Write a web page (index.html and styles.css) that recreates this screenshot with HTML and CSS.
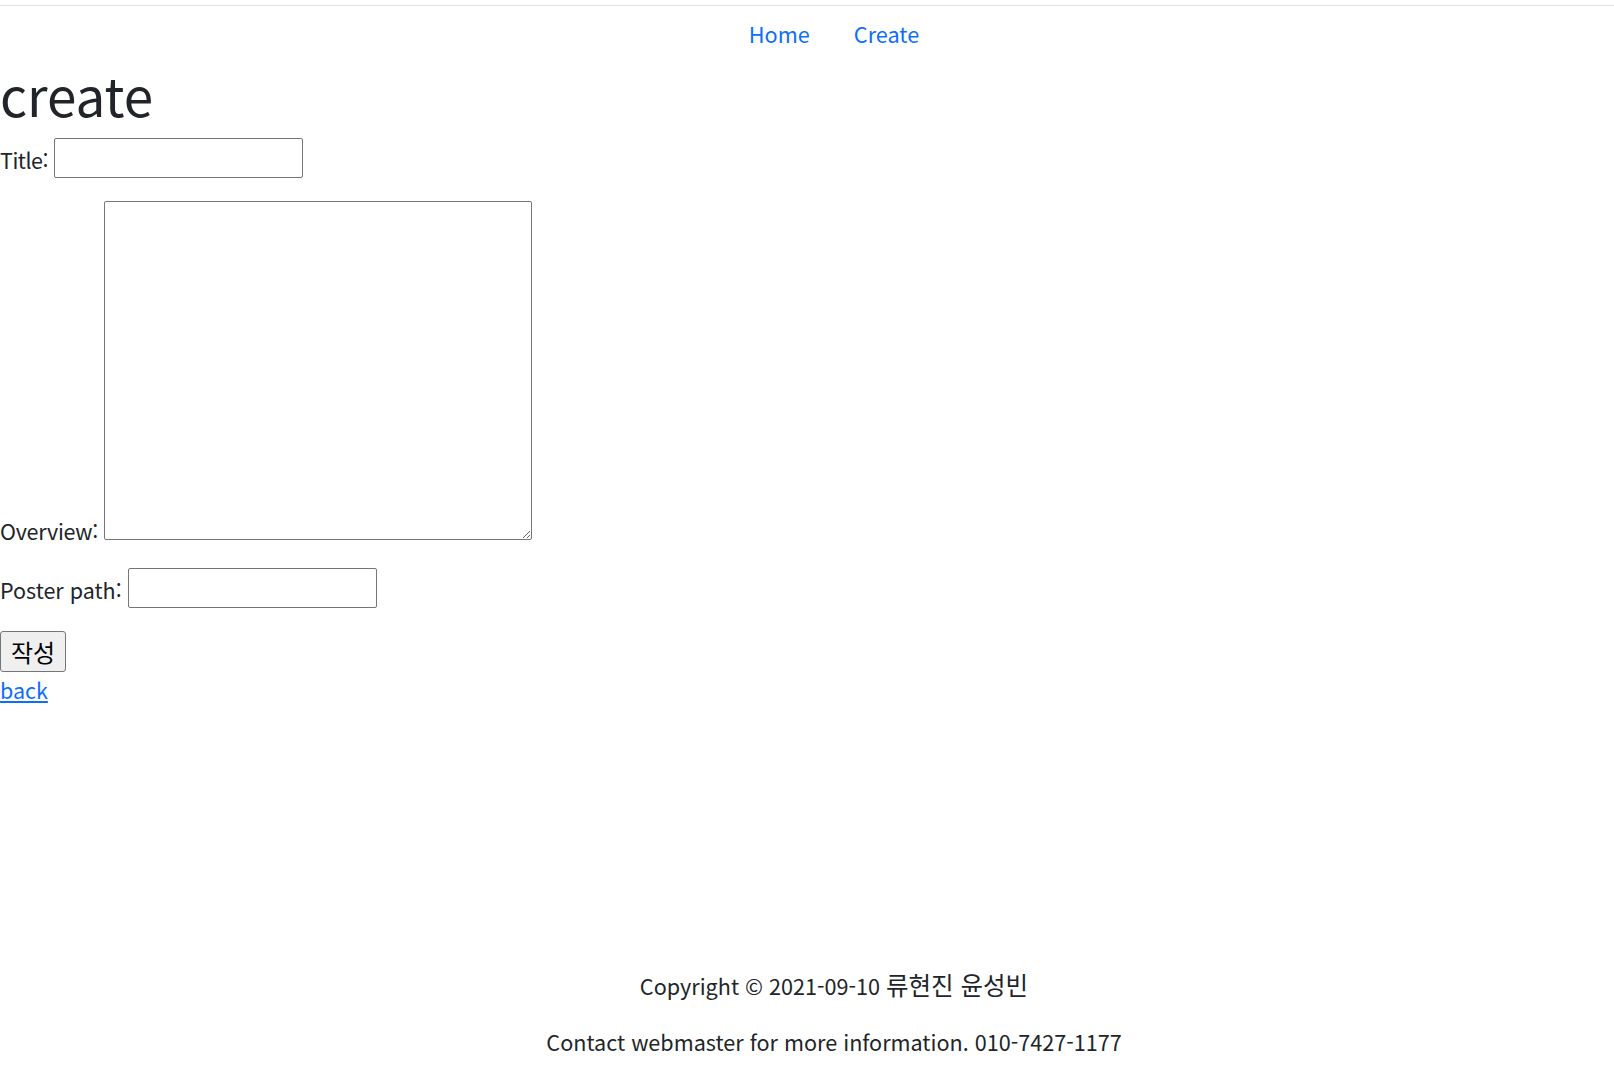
FILE: index.html
```html
<!DOCTYPE html>
<html lang="ko">
<head>
<meta charset="utf-8">
<title>create</title>
<link rel="stylesheet" href="styles.css">
</head>
<body>
<header class="site-header">
  <ul class="nav">
    <li><a class="nav-link" href="#">Home</a></li>
    <li><a class="nav-link" href="#">Create</a></li>
  </ul>
</header>
<main class="content">
  <h1 class="page-title">create</h1>
  <form class="create-form">
    <p class="field field-title"><label for="title">Title:</label> <input id="title" class="text-input" type="text"></p>
    <p class="field field-overview"><label for="overview">Overview:</label> <textarea id="overview" class="text-area"></textarea></p>
    <p class="field field-poster"><label for="poster">Poster path:</label> <input id="poster" class="text-input" type="text"></p>
    <button type="submit" class="submit-btn">작성</button>
  </form>
  <a class="back-link" href="#">back</a>
</main>
<footer class="site-footer">
  <p class="footer-line">Copyright © 2021-09-10 <span class="names">류현진 윤성빈</span></p>
  <p class="footer-line">Contact webmaster for more information. 010-7427-1177</p>
</footer>
</body>
</html>
```
FILE: styles.css
```css
html, body {
  margin: 0;
  padding: 0;
  background: #ffffff;
}

body {
  font-family: "Noto Sans CJK KR", "Noto Sans", sans-serif;
  font-size: 21.5px;
  line-height: 36px;
  color: #212529;
  min-height: 100vh;
  display: flex;
  flex-direction: column;
}

.site-header {
  margin-top: 5px;
  border-top: 1px solid #dee2e6;
}

.nav {
  display: flex;
  justify-content: center;
  list-style: none;
  margin: 0;
  padding: 0 0 0 54px;
}

.nav-link {
  display: block;
  padding: 10px 22px 3px;
  font-size: 21.7px;
  color: #0d6efd;
  text-decoration: none;
}

.content {
  display: block;
}

.page-title {
  margin: 0 0 8px;
  padding-top: 3px;
  font-size: 53px;
  font-weight: 400;
  line-height: 72px;
}

.create-form {
  margin: 0;
}

.field {
  margin: 0 0 23px;
}

.field-title label {
  letter-spacing: -0.5px;
}

.field-overview label {
  letter-spacing: -0.25px;
}

.field-overview {
  margin-bottom: 19px;
}

.field-poster {
  margin-bottom: 23px;
}

.text-input {
  box-sizing: border-box;
  width: 249px;
  height: 40px;
  margin: 0;
  padding: 1px 2px;
  border: 1px solid #767676;
  border-radius: 2px;
  font-family: inherit;
  font-size: 24px;
  line-height: 36px;
  background: #fff;
}

.text-area {
  box-sizing: border-box;
  width: 428px;
  height: 339px;
  margin: 0;
  padding: 2px;
  border: 1px solid #767676;
  border-radius: 2px;
  font-family: inherit;
  font-size: 24px;
  line-height: 36px;
  background: #fff;
  vertical-align: baseline;
}

.submit-btn {
  box-sizing: border-box;
  height: 41px;
  margin: 0;
  padding: 0 10px;
  border: 1px solid #767676;
  border-radius: 3px;
  background: #efefef;
  color: #000;
  font-family: inherit;
  font-size: 24px;
  line-height: 1;
}

.back-link {
  display: block;
  color: #0d6efd;
  text-decoration: underline;
  width: max-content;
}

.site-footer {
  margin-top: auto;
  padding: 0 0 4px 54px;
  text-align: center;
  font-size: 21.6px;
  line-height: 30px;
}

.names {
  font-size: 24.5px;
}

.footer-line {
  margin: 0 0 26px;
}

.footer-line:last-child {
  margin-bottom: 12px;
}
```
